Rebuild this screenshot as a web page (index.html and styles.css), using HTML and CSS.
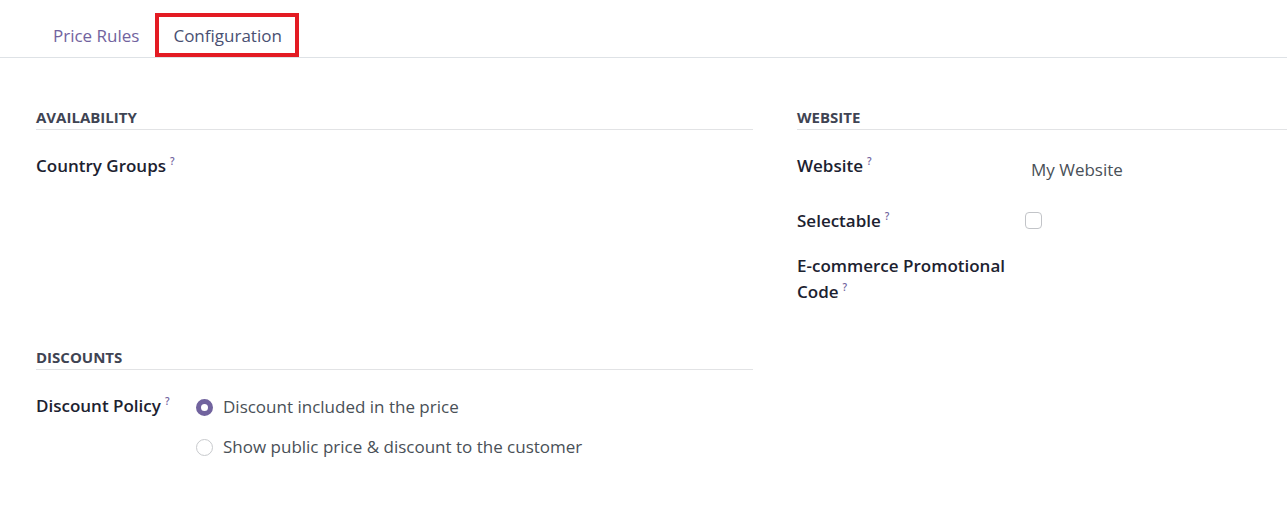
FILE: index.html
```html
<!DOCTYPE html>
<html lang="en">
<head>
    <meta charset="UTF-8">
    <title>Pricelist - Configuration</title>
    <link rel="stylesheet" href="styles.css">
</head>
<body>
<div class="tabs">
    <a href="#" class="tab">Price Rules</a>
    <a href="#" class="tab active">Configuration</a>
</div>
<div class="sheet">
    <div class="group">
        <div class="group-title">Availability</div>
        <div class="row row-first">
            <div class="label">Country Groups<sup>?</sup></div>
            <div class="value"></div>
        </div>
    </div>
    <div class="group group-right">
        <div class="group-title">Website</div>
        <div class="row row-first row-website">
            <div class="label">Website<sup>?</sup></div>
            <div class="value value-text">My Website</div>
        </div>
        <div class="row row-select">
            <div class="label">Selectable<sup>?</sup></div>
            <div class="value"><span class="checkbox"></span></div>
        </div>
        <div class="row">
            <div class="label label-wrap">E-commerce Promotional Code<sup>?</sup></div>
            <div class="value"></div>
        </div>
    </div>
    <div class="group group-discounts">
        <div class="group-title">Discounts</div>
        <div class="row row-first">
            <div class="label">Discount Policy<sup>?</sup></div>
            <div class="value">
                <div class="radio-list">
                    <label class="radio"><span class="dot checked"></span>Discount included in the price</label>
                    <label class="radio"><span class="dot"></span>Show public price &amp; discount to the customer</label>
                </div>
            </div>
        </div>
    </div>
</div>
</body>
</html>
```

FILE: styles.css
```css
* {
    margin: 0;
    padding: 0;
    box-sizing: border-box;
}

body {
    font-family: "Open Sans", "Noto Sans", sans-serif;
    font-size: 17px;
    color: #212529;
    background: #fff;
    overflow: hidden;
}

/* tab bar */
.tabs {
    display: flex;
    padding: 13px 0 0 37px;
    border-bottom: 1px solid #dee2e6;
}

.tab {
    display: block;
    height: 44px;
    line-height: 38px;
    padding: 0 12px;
    border: 4px solid transparent;
    color: #71639e;
    text-decoration: none;
    font-size: 17px;
}

.tab.active {
    border-color: #e31b23;
    color: #495072;
    padding: 0 13px 0 14px;
}

/* form sheet */
.sheet {
    display: grid;
    grid-template-columns: 717px 1fr;
    column-gap: 44px;
    padding: 49px 0 0 36px;
}

.group-title {
    font-size: 15px;
    font-weight: 700;
    line-height: 20px;
    text-transform: uppercase;
    color: #3f4453;
    padding-bottom: 2px;
    border-bottom: 1px solid #e2e3e5;
}

.row {
    display: grid;
    grid-template-columns: 160px 1fr;
    min-height: 45px;
}

.row-first {
    margin-top: 23px;
}

.group-right .row {
    grid-template-columns: 228px 1fr;
}

.row-website {
    min-height: 55px;
}

.label {
    font-weight: 600;
    line-height: 26px;
    color: #1c2230;
}

.label-wrap {
    width: 215px;
}

.label sup {
    position: relative;
    top: -7px;
    font-size: 10px;
    line-height: 0;
    font-weight: 600;
    color: #71639e;
    margin-left: 4px;
    vertical-align: baseline;
}

.value {
    line-height: 26px;
    color: #495057;
}

.value-text {
    padding: 4px 0 0 6px;
}

.checkbox {
    display: inline-block;
    width: 17px;
    height: 17px;
    margin-top: 4px;
    border: 1.5px solid #c2c4c8;
    border-radius: 4px;
    vertical-align: top;
}

.group-discounts {
    margin-top: 42px;
}

.radio-list {
    display: flex;
    flex-direction: column;
    gap: 14px;
    padding-top: 1px;
}

.radio {
    display: flex;
    align-items: center;
    gap: 10px;
    color: #495057;
}

.dot {
    width: 17px;
    height: 17px;
    border-radius: 50%;
    border: 1px solid #c8cacd;
    background: #fff;
}

.dot.checked {
    border: 5px solid #71639e;
    background: #fff;
}
```
